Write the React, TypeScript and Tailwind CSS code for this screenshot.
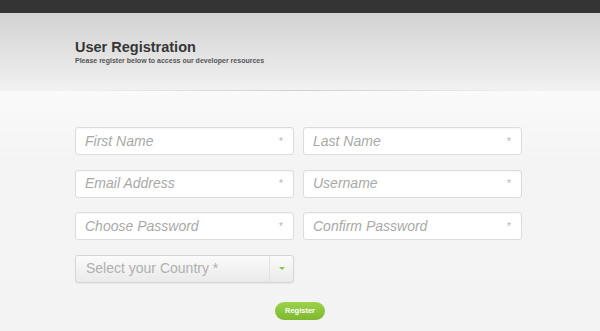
const fields = [
  ['First Name', 'Last Name'],
  ['Email Address', 'Username'],
  ['Choose Password', 'Confirm Password'],
];

function Field({ label }: { label: string }) {
  return (
    <div className="flex h-[28px] w-[219px] items-center justify-between rounded-[3px] border border-[#dcdcdc] bg-white pl-[9px] pr-[10px] shadow-[inset_0_1px_2px_rgba(0,0,0,0.04)]">
      <span className="text-[14px] italic text-[#a9a9a9]">{label}</span>
      <span className="text-[10px] text-[#b5b5b5]">*</span>
    </div>
  );
}

export default function App() {
  return (
    <div className="h-[331px] w-[600px] overflow-hidden bg-[#f3f3f3] font-['Liberation_Sans',Arial,sans-serif]">
      <div className="h-[13px] bg-[#343434]" />
      <div className="h-[77px] bg-gradient-to-b from-[#d2d2d2] to-[#f1f1f1] px-[75px] pt-[26px]">
        <h1 className="text-[14.5px] font-bold leading-[16px] text-[#363636]">User Registration</h1>
        <p className="mt-[2px] text-[7px] font-bold leading-[8px] text-[#555]">
          Please register below to access our developer resources
        </p>
      </div>
      <div className="mx-[55px] h-px bg-gradient-to-r from-transparent via-[#cfcfcf] to-transparent" />
      <div className="bg-gradient-to-b from-[#fafafa] via-[#f4f4f4] via-30% to-[#f3f3f3]">
        <div className="flex flex-col gap-[14.67px] px-[75px] pt-[36px]">
          {fields.map(([a, b]) => (
            <div key={a} className="flex gap-[9px]">
              <Field label={a} />
              <Field label={b} />
            </div>
          ))}
          <div className="flex h-[28px] w-[219px] items-stretch rounded-[3px] border border-[#d6d6d6] bg-gradient-to-b from-[#fbfbfb] to-[#eaeaea] shadow-[0_1px_1px_rgba(0,0,0,0.06)]">
            <span className="flex flex-1 items-center pl-[10px] text-[14px] text-[#b0b0b0]">Select your Country *</span>
            <span className="flex w-[24px] items-center justify-center border-l border-[#e2e2e2]">
              <span className="h-0 w-0 border-x-[3px] border-t-[3px] border-x-transparent border-t-[#8cc63f]" />
            </span>
          </div>
        </div>
        <div className="flex justify-center pb-[20px] pt-[19px]">
          <button className="h-[18px] rounded-full bg-gradient-to-b from-[#9bd24a] to-[#7fb82f] px-[10px] text-[7.5px] font-bold text-white">
            Register
          </button>
        </div>
      </div>
    </div>
  );
}
